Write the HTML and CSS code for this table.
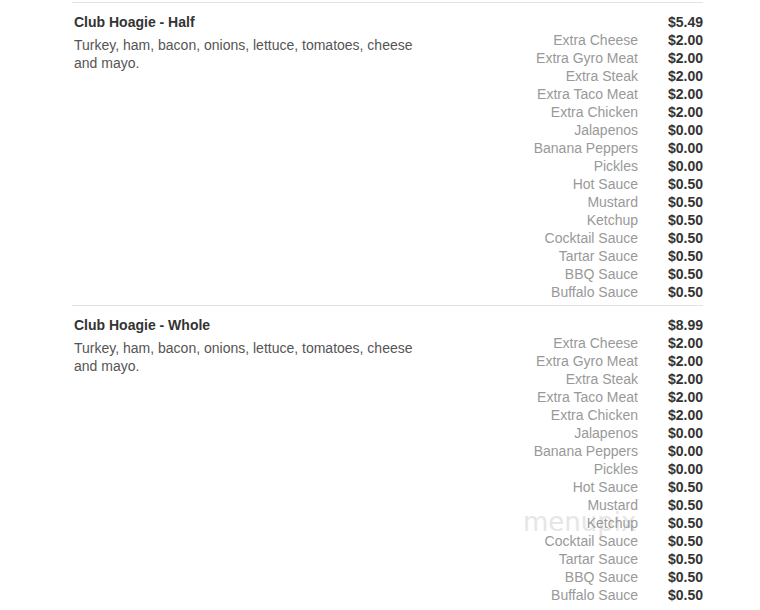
FILE: index.html
```html
<!DOCTYPE html>
<html lang="en">
<head>
  <meta charset="UTF-8" />
  <title>Menu — Club Hoagie</title>
  <link rel="stylesheet" href="styles.css">
</head>
<body>
  <div class="menu" id="menu"></div>
  <div class="watermark">menupix</div>

  <script>
    const options = [
      ["Extra Cheese", "$2.00"],
      ["Extra Gyro Meat", "$2.00"],
      ["Extra Steak", "$2.00"],
      ["Extra Taco Meat", "$2.00"],
      ["Extra Chicken", "$2.00"],
      ["Jalapenos", "$0.00"],
      ["Banana Peppers", "$0.00"],
      ["Pickles", "$0.00"],
      ["Hot Sauce", "$0.50"],
      ["Mustard", "$0.50"],
      ["Ketchup", "$0.50"],
      ["Cocktail Sauce", "$0.50"],
      ["Tartar Sauce", "$0.50"],
      ["BBQ Sauce", "$0.50"],
      ["Buffalo Sauce", "$0.50"]
    ];

    const items = [
      { name: "Club Hoagie - Half", price: "$5.49" },
      { name: "Club Hoagie - Whole", price: "$8.99" }
    ];

    const desc = "Turkey, ham, bacon, onions, lettuce, tomatoes, cheese and mayo.";
    const menu = document.getElementById("menu");

    items.forEach(item => {
      const el = document.createElement("div");
      el.classList.add("item");
      let rows = `<span class="opt"></span><span class="price">${item.price}</span>`;
      options.forEach(o => {
        rows += `<span class="opt">${o[0]}</span><span class="price">${o[1]}</span>`;
      });
      el.innerHTML = `
        <div class="info">
          <h3>${item.name}</h3>
          <p>${desc}</p>
        </div>
        <div class="prices">${rows}</div>
      `;
      menu.appendChild(el);
    });
  </script>
</body>
</html>
```

FILE: styles.css
```css
* { margin: 0; padding: 0; box-sizing: border-box; }

body {
  font-family: "Liberation Sans", Arial, sans-serif;
  font-size: 14px;
  line-height: 18px;
  background: #fff;
  color: #333;
  padding-top: 2px;
}

.menu {
  width: 631px;
  margin-left: 72px;
}

.item {
  display: flex;
  justify-content: space-between;
  border-top: 1px solid #e3e3e3;
  padding: 10px 0 4px;
}

.info {
  width: 352px;
  padding-left: 2px;
}

.info h3 {
  font-size: 14px;
  font-weight: bold;
  color: #333;
}

.info p {
  margin-top: 5px;
  color: #555;
}

.prices {
  display: grid;
  grid-template-columns: auto 36px;
  column-gap: 29px;
}

.prices .opt {
  text-align: right;
  color: #999;
}

.prices .price {
  text-align: right;
  font-weight: bold;
  color: #333;
}

/* faint site watermark behind the options */
.watermark {
  position: absolute;
  z-index: -1;
  left: 523px;
  top: 507px;
  font-family: "DejaVu Sans", sans-serif;
  font-size: 26px;
  line-height: 30px;
  color: #e6e6e6;
  pointer-events: none;
}
```
